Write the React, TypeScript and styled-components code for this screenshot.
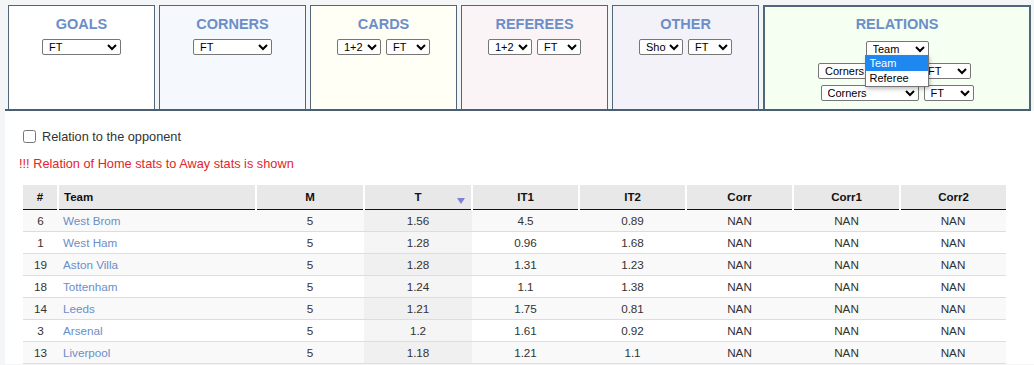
import React from 'react';
import styled, {createGlobalStyle} from "styled-components";

const GlobalStyle = createGlobalStyle`
  html, body {
    margin: 0;
    padding: 0;
    background: #f4f5f7;
    font-family: Arial, "Liberation Sans", sans-serif;
  }
`

const Page = styled.div`
  padding-left: 5px;
`

const TabStrip = styled.div`
  display: flex;
  gap: 4px;
  width: 1026px;
  padding: 5px 0 0 3px;
  box-sizing: border-box;
  border-bottom: 2px solid #4b5f73;
`

const Tab = styled.div<{ $bg: string; $active?: boolean }>`
  position: relative;
  box-sizing: border-box;
  width: ${props => props.$active ? '268px' : '147px'};
  height: 104px;
  padding-top: ${props => props.$active ? '9px' : '10px'};
  background: ${props => props.$bg};
  border: ${props => props.$active ? '2px' : '1px'} solid #52667a;
  border-bottom: none;
  display: flex;
  flex-direction: column;
  align-items: center;
`

const TabTitle = styled.div`
  font-size: 14.5px;
  line-height: 17px;
  font-weight: bold;
  color: #6c8ec8;
  margin-bottom: 6px;
`

const SelectRow = styled.div<{ $shift?: number }>`
  display: flex;
  gap: 5px;
  justify-content: center;
  margin-right: ${props => props.$shift || 0}px;

  & + & {
    margin-top: 6px;
  }
`

const Select = styled.select<{ $w: number }>`
  width: ${props => props.$w}px;
  height: 16px;
  box-sizing: border-box;
  font-family: Arial, "Liberation Sans", sans-serif;
  font-size: 11px;
  padding: 0 0 0 2px;
  border: 1px solid #767676;
  border-radius: 2px;
  background: #fff;
  color: #000;
`

const RelationBlock = styled.div`
  display: flex;
  flex-direction: column;
  align-items: center;
  margin-top: 6px;
`

const DropWrap = styled.div`
  position: relative;
`

const DropList = styled.ul`
  position: absolute;
  top: 16px;
  left: -1px;
  width: 64px;
  box-sizing: border-box;
  margin: 0;
  padding: 0;
  list-style: none;
  background: #fff;
  border: 1px solid #767676;
  box-shadow: 1px 2px 4px rgba(0, 0, 0, 0.25);
  z-index: 5;
  font-size: 11px;
`

const DropItem = styled.li<{ $sel?: boolean }>`
  height: 15px;
  line-height: 15px;
  padding-left: 4px;
  color: ${props => props.$sel ? '#fff' : '#000'};
  background: ${props => props.$sel ? '#1e87f0' : '#fff'};
`

const Content = styled.div`
  background: #fff;
  padding: 18px 0 0 18px;
`

const CheckLine = styled.label`
  display: flex;
  align-items: center;
  gap: 6px;
  font-size: 12.75px;
  color: #333;

  input {
    margin: 0;
    width: 13px;
    height: 13px;
  }
`

const Notice = styled.p`
  margin: 12px 0 0 -4px;
  font-size: 12.75px;
  color: #e3242b;
`

const Table = styled.table`
  margin-top: 14px;
  width: 983px;
  table-layout: fixed;
  border-collapse: collapse;
  font-size: 11.7px;
`

const Th = styled.th<{ $left?: boolean }>`
  position: relative;
  height: 24px;
  padding: 0 5px;
  box-sizing: border-box;
  background: #e8e8e8;
  color: #111;
  font-size: 11.5px;
  text-align: ${props => props.$left ? 'left' : 'center'};
  border-bottom: 1px solid #111;

  & + & {
    border-left: 2px solid #fff;
  }
`

const SortArrow = styled.svg`
  position: absolute;
  right: 6px;
  top: 13px;
`

const Row = styled.tr<{ $odd: boolean }>`
  background: ${props => props.$odd ? '#f9f9f9' : '#fff'};

  &:last-child td {
    border-bottom: 1px solid #ddd;
  }
`

const Td = styled.td<{ $left?: boolean; $sorted?: boolean; $odd?: boolean }>`
  height: 22px;
  padding: 0 5px;
  box-sizing: border-box;
  color: #333;
  text-align: ${props => props.$left ? 'left' : 'center'};
  border-top: 1px solid #ddd;
  background: ${props => props.$sorted ? (props.$odd ? '#f0f0f0' : '#f5f5f5') : 'transparent'};
`

const TeamLink = styled.a`
  color: #6c8ec8;
  text-decoration: none;
`

interface TeamRow {
    id: number
    name: string
    m: number
    t: string
    it1: string
    it2: string
}

const rows: TeamRow[] = [
    {id: 6, name: 'West Brom', m: 5, t: '1.56', it1: '4.5', it2: '0.89'},
    {id: 1, name: 'West Ham', m: 5, t: '1.28', it1: '0.96', it2: '1.68'},
    {id: 19, name: 'Aston Villa', m: 5, t: '1.28', it1: '1.31', it2: '1.23'},
    {id: 18, name: 'Tottenham', m: 5, t: '1.24', it1: '1.1', it2: '1.38'},
    {id: 14, name: 'Leeds', m: 5, t: '1.21', it1: '1.75', it2: '0.81'},
    {id: 3, name: 'Arsenal', m: 5, t: '1.2', it1: '1.61', it2: '0.92'},
    {id: 13, name: 'Liverpool', m: 5, t: '1.18', it1: '1.21', it2: '1.1'},
];

const colWidths = [35, 198, 108, 108, 107, 107, 107, 107, 106];

const PeriodSelect = ({w}: { w: number }) => (
    <Select $w={w} defaultValue="FT">
        <option>FT</option>
        <option>1H</option>
        <option>2H</option>
    </Select>
);

const App = () => {
    return (
        <Page>
            <GlobalStyle/>
            <TabStrip>
                <Tab $bg="#ffffff">
                    <TabTitle>GOALS</TabTitle>
                    <SelectRow><PeriodSelect w={79}/></SelectRow>
                </Tab>
                <Tab $bg="#f5f8fd">
                    <TabTitle>CORNERS</TabTitle>
                    <SelectRow><PeriodSelect w={79}/></SelectRow>
                </Tab>
                <Tab $bg="#fffff5">
                    <TabTitle>CARDS</TabTitle>
                    <SelectRow>
                        <Select $w={44}><option>1+2</option><option>1</option><option>2</option></Select>
                        <PeriodSelect w={44}/>
                    </SelectRow>
                </Tab>
                <Tab $bg="#fbf4f6">
                    <TabTitle>REFEREES</TabTitle>
                    <SelectRow>
                        <Select $w={44}><option>1+2</option><option>1</option><option>2</option></Select>
                        <PeriodSelect w={44}/>
                    </SelectRow>
                </Tab>
                <Tab $bg="#f4f2f9">
                    <TabTitle>OTHER</TabTitle>
                    <SelectRow>
                        <Select $w={44}><option>Shots</option><option>Fouls</option></Select>
                        <PeriodSelect w={44}/>
                    </SelectRow>
                </Tab>
                <Tab $bg="#f5fff2" $active>
                    <TabTitle>RELATIONS</TabTitle>
                    <SelectRow>
                        <DropWrap>
                            <Select $w={63}><option>Team</option><option>Referee</option></Select>
                            <DropList>
                                <DropItem $sel>Team</DropItem>
                                <DropItem>Referee</DropItem>
                            </DropList>
                        </DropWrap>
                    </SelectRow>
                    <RelationBlock>
                        <SelectRow $shift={5}>
                            <Select $w={98}><option>Corners</option><option>Goals</option></Select>
                            <PeriodSelect w={50}/>
                        </SelectRow>
                        <SelectRow>
                            <Select $w={98}><option>Corners</option><option>Goals</option></Select>
                            <PeriodSelect w={50}/>
                        </SelectRow>
                    </RelationBlock>
                </Tab>
            </TabStrip>

            <Content>
                <CheckLine>
                    <input type="checkbox"/>
                    Relation to the opponent
                </CheckLine>
                <Notice>!!! Relation of Home stats to Away stats is shown</Notice>

                <Table>
                    <colgroup>
                        {colWidths.map((w, i) => <col key={i} style={{width: w}}/>)}
                    </colgroup>
                    <thead>
                    <tr>
                        <Th>#</Th>
                        <Th $left>Team</Th>
                        <Th>M</Th>
                        <Th>
                            T
                            <SortArrow width="8" height="6" viewBox="0 0 8 6">
                                <path d="M0 0 L8 0 L4 6 Z" fill="#7c83d4"/>
                            </SortArrow>
                        </Th>
                        <Th>IT1</Th>
                        <Th>IT2</Th>
                        <Th>Corr</Th>
                        <Th>Corr1</Th>
                        <Th>Corr2</Th>
                    </tr>
                    </thead>
                    <tbody>
                    {rows.map((r, i) => {
                        const odd = i % 2 === 0;
                        return (
                            <Row key={r.id} $odd={odd}>
                                <Td>{r.id}</Td>
                                <Td $left><TeamLink href="#">{r.name}</TeamLink></Td>
                                <Td>{r.m}</Td>
                                <Td $sorted $odd={odd}>{r.t}</Td>
                                <Td>{r.it1}</Td>
                                <Td>{r.it2}</Td>
                                <Td>NAN</Td>
                                <Td>NAN</Td>
                                <Td>NAN</Td>
                            </Row>
                        );
                    })}
                    </tbody>
                </Table>
            </Content>
        </Page>
    );
};

export default App;
